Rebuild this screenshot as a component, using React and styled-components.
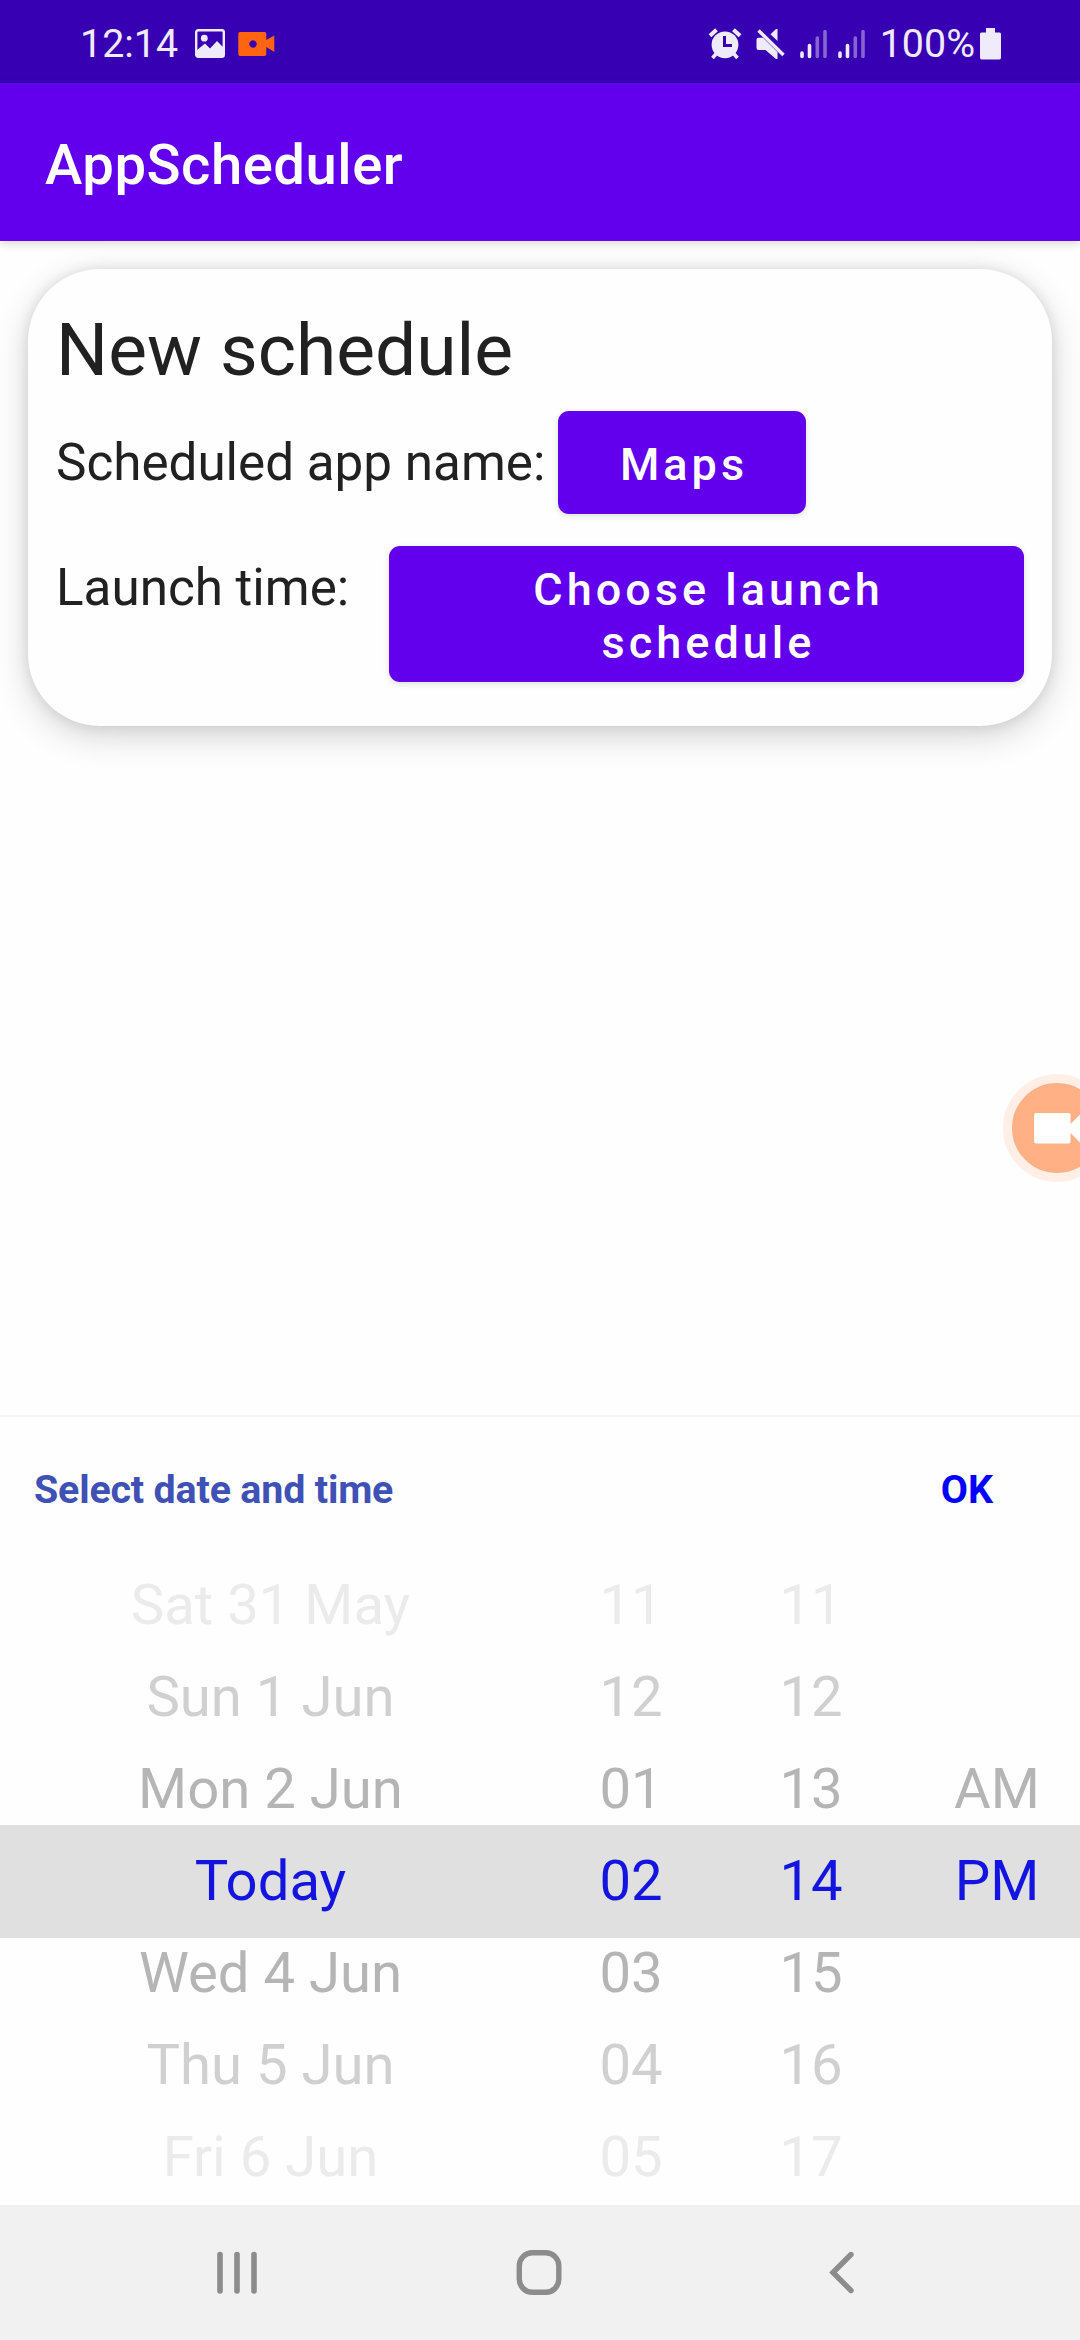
import React from "react";
import styled, { createGlobalStyle } from "styled-components";

const Global = createGlobalStyle`
  *, *::before, *::after { box-sizing: border-box; }
  body { margin: 0; background: #fff; font-family: Roboto, "Noto Sans", sans-serif; }
  button { font-family: inherit; border: 0; margin: 0; padding: 0; background: none; }
`;

const Screen = styled.div`
  position: relative;
  width: 1080px;
  height: 2340px;
  overflow: hidden;
  display: flex;
  flex-direction: column;
  background: #fefefe;
`;

const StatusBar = styled.div`
  flex: none;
  height: 83px;
  padding: 4px 79px 0 80px;
  display: flex;
  align-items: center;
  justify-content: space-between;
  background: #3700b3;
  color: #f0ebfa;
  font-size: 39.4px;
  line-height: 48px;
`;

const StatusGroup = styled.div`
  display: flex;
  align-items: center;
  svg { flex: none; display: block; }
`;

const StatusText = styled.span`
  white-space: nowrap;
`;

const AppBar = styled.header`
  flex: none;
  position: relative;
  z-index: 1;
  height: 158px;
  padding: 6px 45px 0;
  display: flex;
  align-items: center;
  background: #6200ee;
  box-shadow: 0 3px 8px rgba(0, 0, 0, 0.14);
`;

const AppTitle = styled.h1`
  margin: 0;
  color: #fff;
  font-size: 56.25px;
  line-height: 66px;
  font-weight: 500;
  letter-spacing: 0.5px;
`;

const Body = styled.main`
  flex: 1;
  padding: 28px 28px 0;
`;

const Card = styled.section`
  height: 457px;
  padding: 38px 28px 0;
  border-radius: 72px;
  background: #fefefe;
  box-shadow: 0 10px 34px rgba(0, 0, 0, 0.17), 0 0 14px rgba(0, 0, 0, 0.1);
`;

const CardTitle = styled.h2`
  margin: 0;
  color: #212121;
  font-size: 73.1px;
  line-height: 86px;
  font-weight: 400;
`;

const Field = styled.div`
  display: flex;
  align-items: flex-start;
  margin-top: ${(p) => p.$top}px;
`;

const Label = styled.span`
  flex: none;
  width: ${(p) => p.$width}px;
  padding-top: ${(p) => p.$top}px;
  color: #212121;
  font-size: 51.2px;
  line-height: 60px;
  white-space: nowrap;
`;

const Button = styled.button`
  width: ${(p) => p.$width}px;
  height: ${(p) => p.$height}px;
  padding: 3px 43px 0 47px;
  border-radius: 11px;
  background: #6200ee;
  color: #fff;
  font-size: 45px;
  line-height: 53px;
  font-weight: 500;
  letter-spacing: 4.02px;
  text-align: center;
  box-shadow: 0 2px 6px rgba(0, 0, 0, 0.13);
`;

const Recorder = styled.div`
  position: absolute;
  top: 1074px;
  right: -31px;
  width: 108px;
  height: 108px;
  border-radius: 50%;
  border: 9px solid #ffefe6;
  background: #ffb185;
  display: flex;
  align-items: center;
  svg { display: block; margin-left: 21px; }
`;

const Sheet = styled.section`
  flex: none;
  height: 790px;
  border-top: 2px solid #f4f4f4;
  background: #fefefe;
`;

const SheetHeader = styled.div`
  height: 142px;
  padding: 4px 87px 0 34px;
  display: flex;
  align-items: center;
  justify-content: space-between;
  font-size: 39.4px;
  line-height: 46px;
  font-weight: 700;
`;

const SheetTitle = styled.span`
  color: #3f51b5;
  letter-spacing: -0.18px;
`;

const Confirm = styled.button`
  color: #0000ff;
  font-size: 39.4px;
  line-height: 46px;
  font-weight: 700;
`;

const Wheels = styled.div`
  height: 646px;
  display: grid;
  grid-template-columns: 540px 181px 179px 180px;
  background: linear-gradient(#e0e0e0, #e0e0e0) 0 266px / 100% 113px no-repeat;
`;

const Wheel = styled.div`
  display: grid;
  grid-template-rows: repeat(7, 92px);
  padding-left: ${(p) => p.$shift || 1}px;
`;

const shades = ["#ebebeb", "#d0d0d0", "#b5b5b5", "#1414e0"];

const Item = styled.span`
  color: ${(p) => shades[3 - Math.abs(p.$distance)]};
  font-size: 56.25px;
  line-height: 92px;
  text-align: center;
  white-space: nowrap;
`;

const NavBar = styled.nav`
  flex: none;
  height: 135px;
  padding-left: 207px;
  display: grid;
  grid-template-columns: 302px 314px 40px;
  align-items: center;
  background: #f1f1f1;
  svg { display: block; }
`;

const columns = [
  { items: ["Sat 31 May", "Sun 1 Jun", "Mon 2 Jun", "Today", "Wed 4 Jun", "Thu 5 Jun", "Fri 6 Jun"] },
  { items: ["11", "12", "01", "02", "03", "04", "05"] },
  { items: ["11", "12", "13", "14", "15", "16", "17"] },
  { items: ["", "", "AM", "PM", "", "", ""], shift: 14 },
];

const PictureIcon = () => (
  <svg width="30" height="30" viewBox="0 0 30 30">
    <rect x="1.2" y="1.2" width="27.6" height="26.6" rx="2" fill="none" stroke="#f0ebfa" strokeWidth="2.4" />
    <circle cx="9.3" cy="9.2" r="3.4" fill="#f0ebfa" />
    <path d="M2 21L10 14.5L15 19.5L22 12L29 19V28H2Z" fill="#f0ebfa" />
  </svg>
);

const CameraBadge = () => (
  <svg width="37" height="26" viewBox="0 0 37 26">
    <path
      fillRule="evenodd"
      fill="#ff6410"
      d="M2 1H26.500Q28.300 1 28.300 3V9L36.300 4.500V21L28.300 16V23Q28.300 25 26.500 25H2Q.3 25 .3 23V3Q.3 1 2 1ZM15 9.300a3.700 3.700 0 1 0 .01 0Z"
    />
  </svg>
);

const AlarmIcon = () => (
  <svg width="34" height="32" viewBox="0 0 34 32" fill="none" stroke="#f0ebfa">
    <circle cx="17" cy="16.800" r="13.400" fill="#f0ebfa" stroke="none" />
    <path d="M2 7.800L8.500 1.800M32 7.800L25.500 1.800" strokeWidth="4" />
    <path d="M4.500 30L8 26M29.500 30L26 26" strokeWidth="3.500" />
    <path d="M16.500 8V17.500H24" stroke="#3700b3" strokeWidth="3" />
  </svg>
);

const MuteIcon = () => (
  <svg width="30" height="32" viewBox="0 0 30 32">
    <path d="M.5 11.500Q.5 9.700 2.500 9.700H7L21.500 24V31H20L9.500 22H2.500Q.5 22 .5 20Z" fill="#f0ebfa" />
    <path d="M20 1H21.500V13L14.500 6.200Z" fill="#f0ebfa" />
    <path d="M2.500 2.500L27.500 27" stroke="#f0ebfa" strokeWidth="3.400" />
  </svg>
);

const SignalIcon = () => (
  <svg width="27" height="30" viewBox="0 0 27 30" stroke="#f0ebfa" strokeWidth="3.600" strokeLinecap="round">
    <path d="M2 24V27.500M9.500 16.500V27.500" />
    <path d="M17.300 9V27.500M25 2.500V27.500" opacity=".43" />
  </svg>
);

const BatteryIcon = () => (
  <svg width="21" height="32" viewBox="0 0 21 32" fill="#f0ebfa">
    <path d="M6 0H15V4.500H19.500Q21 4.500 21 6V29.500Q21 31.500 19.500 31.500H1.500Q0 31.500 0 29.500V6Q0 4.500 1.500 4.500H6Z" />
  </svg>
);

const CameraIcon = () => (
  <svg width="62" height="32" viewBox="0 0 62 32" fill="#fff">
    <rect x="1" y="1" width="36.500" height="30.500" rx="2" />
    <path d="M37 12.500L48 1.500V31.500L37 20.500Z" />
  </svg>
);

const RecentsIcon = () => (
  <svg width="60" height="46" viewBox="0 0 60 46" stroke="#8c8c8c" strokeWidth="5.600" strokeLinecap="round">
    <path d="M13 4.500V41M30 4.500V41M47 4.500V41" />
  </svg>
);

const HomeIcon = () => (
  <svg width="60" height="46" viewBox="0 0 60 46">
    <rect x="10.300" y="2.800" width="39.500" height="39.500" rx="13" fill="none" stroke="#8c8c8c" strokeWidth="5.400" />
  </svg>
);

const BackIcon = () => (
  <svg width="40" height="46" viewBox="0 0 40 46">
    <path d="M28 4.500L10 22.500L28 40.500" fill="none" stroke="#8c8c8c" strokeWidth="5.400" strokeLinecap="round" />
  </svg>
);

const Gap = styled.span`
  flex: none;
  width: ${(p) => p.$size}px;
`;

export default function App() {
  return (
    <Screen>
      <Global />
      <StatusBar>
        <StatusGroup>
          <StatusText>12:14</StatusText>
          <Gap $size={17} />
          <PictureIcon />
          <Gap $size={13} />
          <CameraBadge />
        </StatusGroup>
        <StatusGroup>
          <AlarmIcon />
          <Gap $size={14} />
          <MuteIcon />
          <Gap $size={14} />
          <SignalIcon />
          <Gap $size={11} />
          <SignalIcon />
          <Gap $size={15} />
          <StatusText>100%</StatusText>
          <Gap $size={5} />
          <BatteryIcon />
        </StatusGroup>
      </StatusBar>
      <AppBar>
        <AppTitle>AppScheduler</AppTitle>
      </AppBar>
      <Body>
        <Card>
          <CardTitle>New schedule</CardTitle>
          <Field $top={18}>
            <Label $width={502} $top={22}>Scheduled app name:</Label>
            <Button $width={248} $height={103}>Maps</Button>
          </Field>
          <Field $top={32}>
            <Label $width={333} $top={12}>Launch time:</Label>
            <Button $width={635} $height={136}>Choose launch schedule</Button>
          </Field>
        </Card>
      </Body>
      <Sheet>
        <SheetHeader>
          <SheetTitle>Select date and time</SheetTitle>
          <Confirm>OK</Confirm>
        </SheetHeader>
        <Wheels>
          {columns.map((column, c) => (
            <Wheel key={c} $shift={column.shift}>
              {column.items.map((text, i) => (
                <Item key={i} $distance={i - 3}>{text}</Item>
              ))}
            </Wheel>
          ))}
        </Wheels>
      </Sheet>
      <NavBar>
        <RecentsIcon />
        <HomeIcon />
        <BackIcon />
      </NavBar>
      <Recorder>
        <CameraIcon />
      </Recorder>
    </Screen>
  );
}
